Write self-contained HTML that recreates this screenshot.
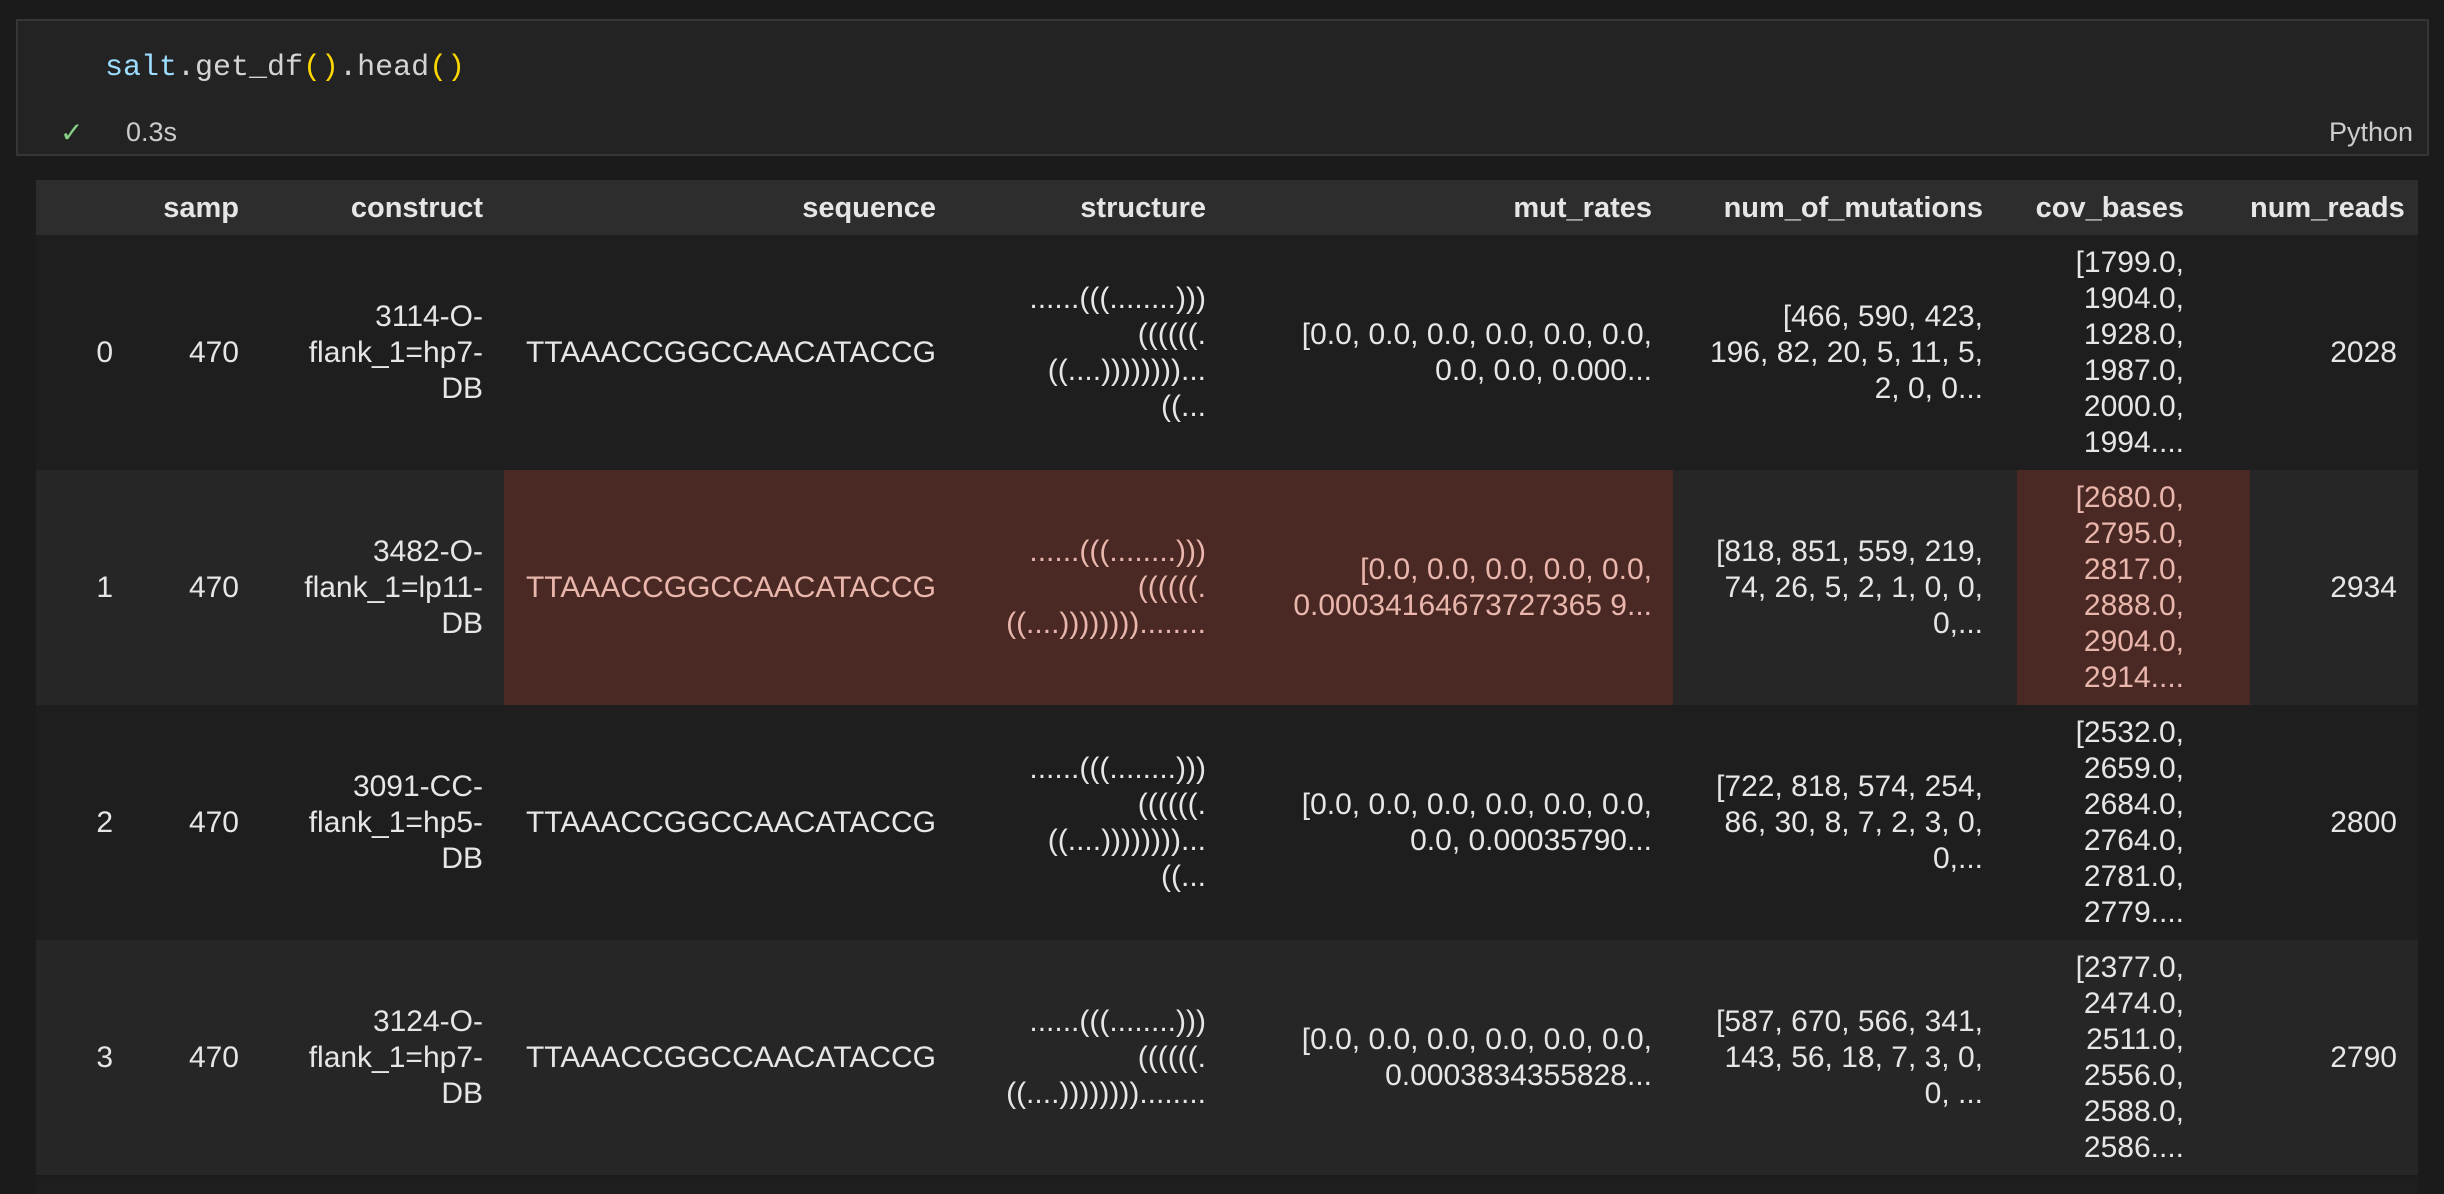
<!DOCTYPE html>
<html><head><meta charset="utf-8"><style>
html,body{margin:0;padding:0;background:#1b1b1b;width:2444px;height:1194px;overflow:hidden;position:relative;}
.cell{position:absolute;left:16px;top:19px;width:2409px;height:133px;border:2px solid #363636;background:#232323;box-sizing:content-box;}
.code{position:absolute;left:87px;top:30px;font:30px "Liberation Mono",monospace;color:#d4d4d4;white-space:pre;}
.v{color:#9cdcfe}.p{color:#ffd700}
.chk{position:absolute;left:42px;top:95px;font:28px "Liberation Sans",sans-serif;color:#89d185;}
.time{position:absolute;left:108px;top:96px;font:27px "Liberation Sans",sans-serif;color:#cccccc;}
.py{position:absolute;right:14px;top:96px;font:27px "Liberation Sans",sans-serif;color:#cccccc;}
table{position:absolute;left:36px;top:180px;border-collapse:collapse;table-layout:fixed;width:2382px;font:30px/36px "Liberation Sans",sans-serif;color:#e6e6e6;}
th{background:#2d2d2d;height:55px;font-weight:bold;font-size:29px;text-align:right;padding:0 21px 0 0;white-space:nowrap;}
td{text-align:right;vertical-align:middle;padding:0 21px 0 0;white-space:nowrap;height:235px;}
th.nr{padding-right:21px}
th.nm,td.nm{padding-right:34px}
th.cb,td.cb{padding-right:66px}
tr.a td{background:#1e1e1e}
tr.b td{background:#262626}
td.h{background:#4a2925 !important;color:#e9b6ac;}
.tail{position:absolute;left:36px;top:1177px;width:2382px;height:17px;background:#1e1e1e;}
</style></head><body>
<div class="cell">
<div class="code"><span class="v">salt</span>.get_df<span class="p">()</span>.head<span class="p">()</span></div>
<div class="chk">✓</div><div class="time">0.3s</div><div class="py">Python</div>
</div>
<table>
<colgroup><col style="width:98px"><col style="width:126px"><col style="width:244px"><col style="width:453px"><col style="width:270px"><col style="width:446px"><col style="width:344px"><col style="width:233px"><col style="width:168px"></colgroup>
<tr><th></th><th>samp</th><th>construct</th><th>sequence</th><th>structure</th><th>mut_rates</th><th class="nm">num_of_mutations</th><th class="cb">cov_bases</th><th class="nr">num_reads</th></tr>
<tr class="a"><td>0</td><td>470</td><td>3114-O-<br>flank_1=hp7-<br>DB</td><td>TTAAACCGGCCAACATACCG</td><td>......(((........)))<br>((((((.<br>((....))))))))...<br>((...</td><td>[0.0, 0.0, 0.0, 0.0, 0.0, 0.0,<br>0.0, 0.0, 0.000...</td><td class="nm">[466, 590, 423,<br>196, 82, 20, 5, 11, 5,<br>2, 0, 0...</td><td class="cb">[1799.0,<br>1904.0,<br>1928.0,<br>1987.0,<br>2000.0,<br>1994....</td><td>2028</td></tr>
<tr class="b"><td>1</td><td>470</td><td>3482-O-<br>flank_1=lp11-<br>DB</td><td class="h">TTAAACCGGCCAACATACCG</td><td class="h">......(((........)))<br>((((((.<br>((....))))))))........</td><td class="h">[0.0, 0.0, 0.0, 0.0, 0.0,<br>0.00034164673727365 9...</td><td class="nm">[818, 851, 559, 219,<br>74, 26, 5, 2, 1, 0, 0,<br>0,...</td><td class="h cb">[2680.0,<br>2795.0,<br>2817.0,<br>2888.0,<br>2904.0,<br>2914....</td><td>2934</td></tr>
<tr class="a"><td>2</td><td>470</td><td>3091-CC-<br>flank_1=hp5-<br>DB</td><td>TTAAACCGGCCAACATACCG</td><td>......(((........)))<br>((((((.<br>((....))))))))...<br>((...</td><td>[0.0, 0.0, 0.0, 0.0, 0.0, 0.0,<br>0.0, 0.00035790...</td><td class="nm">[722, 818, 574, 254,<br>86, 30, 8, 7, 2, 3, 0,<br>0,...</td><td class="cb">[2532.0,<br>2659.0,<br>2684.0,<br>2764.0,<br>2781.0,<br>2779....</td><td>2800</td></tr>
<tr class="b"><td>3</td><td>470</td><td>3124-O-<br>flank_1=hp7-<br>DB</td><td>TTAAACCGGCCAACATACCG</td><td>......(((........)))<br>((((((.<br>((....))))))))........</td><td>[0.0, 0.0, 0.0, 0.0, 0.0, 0.0,<br>0.0003834355828...</td><td class="nm">[587, 670, 566, 341,<br>143, 56, 18, 7, 3, 0,<br>0, ...</td><td class="cb">[2377.0,<br>2474.0,<br>2511.0,<br>2556.0,<br>2588.0,<br>2586....</td><td>2790</td></tr>
</table>
<div class="tail"></div>
</body></html>
